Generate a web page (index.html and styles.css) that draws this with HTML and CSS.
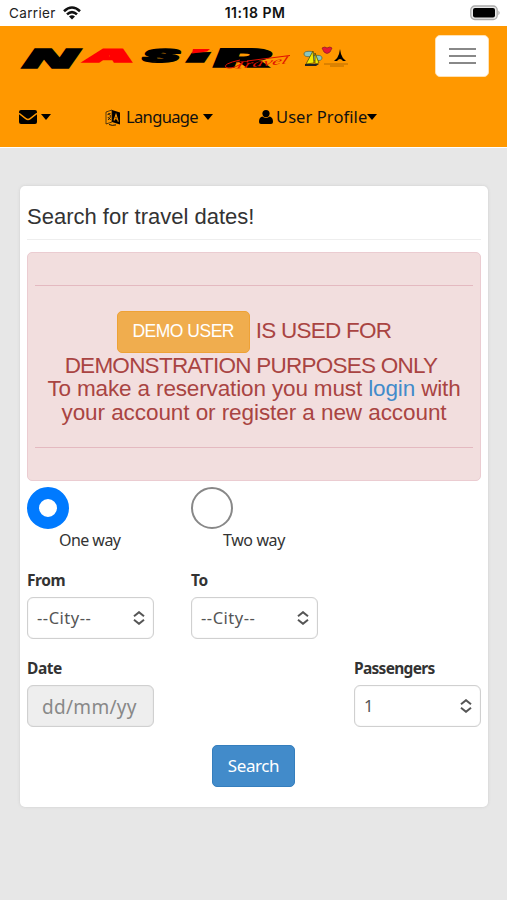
FILE: index.html
```html
<!DOCTYPE html>
<html lang="en">
<head>
<meta charset="utf-8">
<title>Nasir</title>
<link rel="stylesheet" href="styles.css">
</head>
<body>
<div class="status">
  <div class="carrier"><span>Carrier</span>
    <svg width="20" height="16" viewBox="0 0 20 16" fill="none" stroke="#111" stroke-width="2.6"><path d="M2 6.2Q10-1.2 18 6.2M5 9.4Q10 4.8 15 9.4"/><path d="M10 14.5L7 11.6Q10 9 13 11.6Z" fill="#111" stroke="none"/></svg>
  </div>
  <div class="time">11:18 PM</div>
  <svg class="battery" width="31" height="16" viewBox="0 0 31 16"><rect x=".8" y="1" width="26.4" height="13.5" rx="4" fill="#e9e9e9" stroke="#aaa" stroke-width="1.3"/><rect x="3" y="3" width="22" height="9.5" rx="2"/><path d="M28.4 5.5q2.6 2.3 0 4.8z" fill="#aaa"/></svg>
</div>
<header class="nav">
  <div class="brand-row">
    <svg class="logo" width="340" height="36" viewBox="15 40 340 36">
      <g class="logo-text">
        <text transform="translate(19.5 68.3) skewX(-35)" font-size="26" textLength="51" lengthAdjust="spacingAndGlyphs">N</text>
        <text class="red" transform="translate(83 62.3) skewX(-25)" font-size="17.5" textLength="48" lengthAdjust="spacingAndGlyphs">A</text>
        <text transform="translate(140.5 62.3) skewX(-25)" font-size="17.5" textLength="36" lengthAdjust="spacingAndGlyphs">S</text>
        <text transform="translate(185 62.3) skewX(-34)" font-size="17" textLength="20" lengthAdjust="spacingAndGlyphs">i</text>
        <text transform="translate(211 67.3) skewX(-22)" font-size="25" textLength="57" lengthAdjust="spacingAndGlyphs">R</text>
      </g>
      <path d="M190 46h26v3l-6 3-22 .5z" fill="#ff9800"/>
      <path d="M193 49h17l-3 2.500-15 2z" fill="#f00"/>
      <text class="script" transform="translate(233 69) rotate(-6) skewX(-25)" textLength="54" lengthAdjust="spacingAndGlyphs" font-size="10">Travel</text>
      <path d="M240 60q-18 4-14 7.500 5 2 14-3M247 61l43-5.500" fill="none" stroke="#e01000"/>
      <ellipse cx="309" cy="54" rx="5" ry="2.700" fill="#8cc6bd" stroke="#47624c" stroke-width=".7"/><ellipse cx="317" cy="58" rx="5" ry="2.700" fill="#8cc6bd" stroke="#47624c" stroke-width=".7"/>
      <path d="M313 51l1 12-8 1zM315 53l4 10-4 1z" fill="#f4e900" stroke="#473c00" stroke-width=".7"/><path d="M305 64h14l-3 2h-11z" fill="#222"/>
      <path d="M322 48q3-2 5 0 3-2 5 0l-2 4q-3 3-6 0z" fill="#e91832" stroke="#872026" stroke-width=".7"/>
      <path d="M340 49l1 5q1 4 5 7h-3q-3-4-6 0h-3q4-3 5-7z"/><path d="M324 64h24M330 66h14" stroke="#a65f00" stroke-width=".8"/>
    </svg>
    <button class="toggler" aria-label="Menu"><i></i><i></i><i></i></button>
  </div>
  <nav class="links">
    <a class="mail"><svg width="18" height="14" viewBox="0 0 18 14"><rect width="18" height="14" rx="2"/><path d="M0 3.4l6.8 5.2q2.2 1.7 4.4 0L18 3.4" fill="none" stroke="#ff9800" stroke-width="1.4"/></svg><svg class="caret" width="10" height="6"><path d="M0 0h10L5 6z"/></svg></a>
    <a class="lang"><svg width="16" height="17" viewBox="0 0 16 17"><path d="M7 1l8 2.5v12L7 13z"/><path d="M1 3l6-2v12l-6 2z" fill="none" stroke="#111" stroke-width=".7"/><path d="M2.5 5.5l3-1M4 4v2M3 11q3-2 2.3-5M2.8 8l3 3" stroke="#111" fill="none" stroke-width=".9"/><path d="M9 11.5l2-6 2.3 7.2M9.6 9.5l3 .8" stroke="#ff9800" stroke-width="1.1" fill="none"/><path d="M4 15.5q3 1.5 7 .4" stroke="#111" fill="none"/></svg><span>Language</span><svg class="caret" width="10" height="6"><path d="M0 0h10L5 6z"/></svg></a>
    <a class="user"><svg width="14" height="14" viewBox="0 0 14 14"><circle cx="7" cy="3.6" r="3.6"/><path d="M3.2 6.6Q7 9.4 10.8 6.6 14 7.4 14 12q0 2-2 2H2q-2 0-2-2 0-4.6 3.2-5.4z"/></svg><span>User Profile</span><svg class="caret" width="10" height="6"><path d="M0 0h10L5 6z"/></svg></a>
  </nav>
</header>
<main class="card">
  <h1>Search for travel dates!</h1>
  <section class="alert">
    <div class="message">
      <div class="line first"><button class="demo">DEMO USER</button><span class="used">IS USED FOR</span></div>
      <div class="line"><span class="l2">DEMONSTRATION PURPOSES ONLY</span></div>
      <div class="line"><span class="l3">To make a reservation you must <a>login</a> with</span></div>
      <div class="line"><span class="l4">your account or register a new account</span></div>
    </div>
  </section>
  <form>
    <div class="grid radios">
      <label><i class="radio on"></i><span>One way</span></label>
      <label><i class="radio"></i><span>Two way</span></label>
    </div>
    <div class="grid cities">
      <div class="field"><b>From</b><div class="select"><span class="city">--City--</span><svg width="12" height="14" viewBox="0 0 12 14"><path d="M1 5.2l5-4 5 4M1 8.8l5 4 5-4"/></svg></div></div>
      <div class="field"><b>To</b><div class="select"><span class="city">--City--</span><svg width="12" height="14" viewBox="0 0 12 14"><path d="M1 5.2l5-4 5 4M1 8.8l5 4 5-4"/></svg></div></div>
    </div>
    <div class="grid dates">
      <div class="field"><b>Date</b><div class="select date"><span>dd/mm/yy</span></div></div>
      <div class="field passengers"><b>Passengers</b><div class="select"><span>1</span><svg width="12" height="14" viewBox="0 0 12 14"><path d="M1 5.2l5-4 5 4M1 8.8l5 4 5-4"/></svg></div></div>
    </div>
    <button type="button" class="search">Search</button>
  </form>
</main>
</body>
</html>
```
FILE: styles.css
```css
* { box-sizing: border-box; }
body { margin: 0; height: 900px; overflow: hidden; background: #e7e7e7; color: #333; font-family: "Noto Sans", sans-serif; }
button { font: inherit; border: 0; padding: 0; }
svg { display: block; flex: none; }
.status { height: 26px; background: #fff; display: grid; grid-template-columns: 1fr auto 1fr; align-items: center; padding: 0 6px 0 9px; font: 13.5px/26px Inter, sans-serif; color: #222; }
.carrier { display: flex; align-items: center; gap: 6px; letter-spacing: .35px; }
.time { font-weight: 600; color: #111; font-size: 14px; letter-spacing: .5px; }
.battery { justify-self: end; }
.nav { height: 122px; background: #ff9800; border-bottom: 1px solid #fff; }
.brand-row { display: flex; justify-content: space-between; padding: 9px 18px 0 15px; height: 76px; }
.logo { margin-top: 5px; }
.logo-text { font-family: Inter, sans-serif; font-weight: 900; stroke: #000; stroke-width: 1.5px; }
.logo-text .red { fill: #f00; stroke: #f00; }
.script { font-family: "Liberation Serif", serif; font-style: italic; fill: #e01000; }
.toggler { width: 54px; height: 42px; background: #fff; border: 1px solid #ffe2b5; border-radius: 5px; display: flex; flex-direction: column; align-items: center; justify-content: center; gap: 5px; }
.toggler i { width: 27px; height: 2px; background: #888; }
.links { display: flex; padding-left: 19px; height: 30px; align-items: center; color: #111; font-size: 16.5px; }
.links a { display: flex; align-items: center; }
.links span { margin-top: -1px; }
.mail { width: 86px; gap: 4px; }
.lang { width: 154px; gap: 5px; letter-spacing: -.65px; }
.user { gap: 3px; letter-spacing: .08px; }
.user .caret { margin-left: -3px; }
.card { width: 468px; height: 621px; margin: 38px 0 0 20px; background: #fff; border-radius: 5px; padding: 0 7px; box-shadow: 0 0 3px #ccc; }
h1 { margin: 0; height: 54px; border-bottom: 1px solid #eee; font: 22px/62px "Liberation Sans", sans-serif; letter-spacing: 0; }
.alert { margin-top: 12px; height: 229px; padding: 32px 7px 33px; background: #f2dede; border: 1px solid #ebccd1; border-radius: 5px; color: #a94442; font: 23px/23.5px "Liberation Sans", sans-serif; }
.message { height: 163px; border-top: 1px solid #e4b9c0; border-bottom: 1px solid #e4b9c0; padding-top: 25px; text-align: center; white-space: nowrap; }
.first { display: flex; justify-content: center; gap: 6px; height: 42px; margin-bottom: .5px; }
.demo { width: 133px; height: 42px; background: #f0ad4e; border: 1px solid #eea236; border-radius: 5px; color: #fff; font-size: 17.5px; letter-spacing: -.5px; }
.used { line-height: 40px; font-size: 22.5px; letter-spacing: -.75px; }
.l2 { font-size: 22.5px; letter-spacing: -.75px; padding-right: 6px; }
.l3 { font-size: 22.5px; letter-spacing: -.14px; }
.l4 { font-size: 22.5px; letter-spacing: -.07px; }
.alert a { color: #428bca; }
.grid { display: grid; grid-template-columns: repeat(2, 127px); column-gap: 37px; }
.radios { margin-top: 6px; height: 84px; font-size: 16px; letter-spacing: -.55px; }
.radios span { display: block; margin-left: 32px; line-height: 23px; }
.radios label + label span { letter-spacing: -.4px; }
.radio { display: block; width: 42px; height: 42px; border: 2px solid #888; border-radius: 50%; }
.on { border: 12px solid #007aff; }
.field b { display: block; height: 26px; font-size: 15.5px; line-height: 19px; letter-spacing: -.45px; }
.select { height: 42px; border: 1.5px solid #d0d0d0; box-shadow: inset 0 0 1px #ccc; border-radius: 6px; padding: 0 8px 0 9px; display: flex; justify-content: space-between; align-items: center; font-size: 16.5px; color: #555; letter-spacing: -.25px; }
.select span { margin-top: -1px; }
.select .city { letter-spacing: .5px; }
.select path { fill: none; stroke: #555; stroke-width: 2; }
.cities { height: 88px; }
.dates { grid-template-columns: 127px 127px; justify-content: space-between; }
.date { background: #eee; padding: 0 14px; font-size: 19px; color: #888; letter-spacing: .3px; }
.date span { margin-top: 1px; }
.passengers b { letter-spacing: -.7px; }
.search { display: block; width: 83px; height: 42px; margin: 18px 0 0 185px; padding-bottom: 2px; background: #428bca; border: 1px solid #357ebd; border-radius: 5px; color: #fff; font-size: 17px; letter-spacing: -.4px; }
```
